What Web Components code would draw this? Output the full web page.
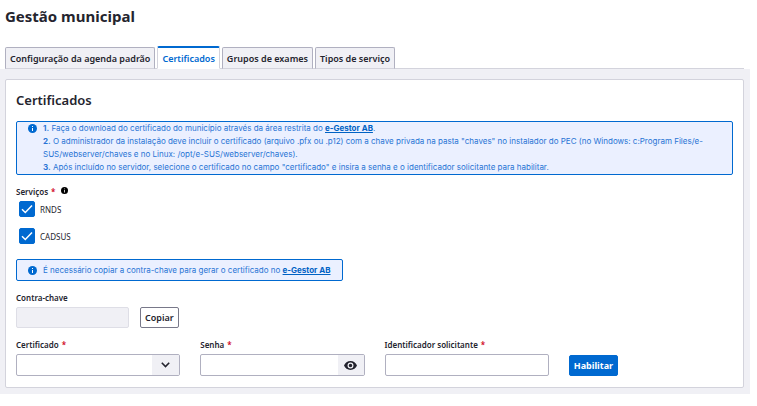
<!DOCTYPE html>
<html lang="pt-BR">
<head>
<meta charset="utf-8">
<title>Gestão municipal</title>
<style>
:root{--blue:#0069d0;--ink:#24242e;--grey:#f0f0f5;--line:#d3d3dc;--edge:#b0b0c0;--tint:#ebf0ff}
body{margin:0;padding-right:7px;background:#fff;color:var(--ink);font:8px/13px "Noto Sans","Open Sans",sans-serif}
</style>
</head>
<body>
<municipal-page></municipal-page>
<script>
const define=(name,html,setup)=>{
  const t=document.createElement('template');
  t.innerHTML='<style>*{box-sizing:border-box}button,input,select{font:inherit;color:inherit;margin:0}</style>'+html;
  customElements.define(name,class extends HTMLElement{
    constructor(){super();this.attachShadow({mode:'open'}).append(t.content.cloneNode(true));}
    connectedCallback(){if(setup)setup(this,this.shadowRoot);}
  });
};
const label=(el,root)=>{
  root.querySelector('.text').textContent=el.getAttribute('label');
  const star=root.querySelector('.star');
  if(star&&!el.hasAttribute('required'))star.remove();
};
const labelStyle='label{display:block;font-weight:600;line-height:13px;margin-bottom:3px}.star{color:#d0021b;margin-left:3px}';

define('info-icon',`<style>:host{display:inline-block;width:9px;height:9px}svg{display:block;width:100%;height:100%}</style>
<svg viewBox="0 0 18 18" aria-hidden="true"><circle cx="9" cy="9" r="9" fill="currentColor"/><path d="M8 4h2v2H8zM8 8h2v6H8z" fill="#fff"/></svg>`);

define('tab-item',`<style>:host{display:block}
button{display:block;height:22px;padding:0 4px;border:1px solid var(--edge);border-bottom-color:var(--line);border-radius:2px 2px 0 0;background:var(--grey);font-size:9px;font-weight:600;white-space:nowrap}
:host([active]) button{height:23px;border-color:var(--line);border-top:2px solid var(--blue);border-bottom-color:#fff;background:#fff;color:var(--blue)}
</style><button type="button" role="tab"><slot></slot></button>`,
(el,r)=>r.querySelector('button').setAttribute('aria-selected',el.hasAttribute('active')));

define('tab-bar',`<style>:host{display:flex;align-items:flex-end;gap:2px;margin:0 6px 0 5px;border-bottom:1px solid var(--line)}
::slotted(*){margin-bottom:-1px}</style><slot></slot>`,el=>el.setAttribute('role','tablist'));

define('info-alert',`<style>:host{display:flex;gap:6px;padding:0 11px;border:1px solid var(--blue);border-radius:2px;background:var(--tint);color:#2874d5;font-family:Inter,"Noto Sans",sans-serif}
:host([compact]){width:fit-content;padding:4px 11px 3px}
info-icon{flex:none;margin-top:2px;color:var(--blue)}</style><info-icon></info-icon><div><slot></slot></div>`);

define('text-link',`<style>a{color:#0062c4;font-weight:700;text-decoration:underline}</style><a href="#"><slot></slot></a>`);

define('check-field',`<style>:host{display:block;padding-left:3px}
label{display:flex;align-items:center;gap:5px;width:fit-content}
span.box{display:grid;width:16px;height:16px}
input,svg{grid-area:1/1;width:16px;height:16px}
input{appearance:none;border:1px solid var(--blue);border-radius:2px}
input:checked{background:var(--blue)}
svg{pointer-events:none;visibility:hidden}input:checked+svg{visibility:visible}</style>
<label><span class="box"><input type="checkbox" checked><svg viewBox="0 0 16 16" fill="none" stroke="#fff" stroke-width="1.500"><path d="M3 8.200 6.300 11.500 13 4.500"/></svg></span><span class="text"></span></label>`,label);

define('text-field',`<style>:host{display:block}${labelStyle}
input{display:block;width:100%;height:22px;padding:0 6px;border:1px solid var(--edge);border-radius:2px;background:#fff}
input:disabled{height:21px;background:var(--grey);border-color:#dedee6}</style>
<label for="f"><span class="text"></span><span class="star">*</span></label><input id="f" type="text">`,
(el,r)=>{label(el,r);r.querySelector('input').disabled=el.hasAttribute('disabled');});

define('select-field',`<style>:host{display:block}${labelStyle}
.wrap{display:grid;grid-template-columns:1fr 27px;height:22px;border:1px solid var(--edge);border-radius:2px;overflow:hidden}
.end{grid-area:1/2;display:grid;place-items:center;background:var(--grey);pointer-events:none}
select{grid-area:1/1/2/3;appearance:none;border:0;background:none;width:100%;padding:0 6px}
svg{width:9px;height:6px}</style>
<label for="f"><span class="text"></span><span class="star">*</span></label>
<div class="wrap"><span class="end"><svg viewBox="0 0 9 6" fill="none" stroke="#24242e" stroke-width="1.600"><path d="M.8.8 4.500 4.500 8.200.8"/></svg></span><select id="f"><option></option></select></div>`,label);

define('password-field',`<style>:host{display:block}${labelStyle}
.wrap{display:grid;grid-template-columns:1fr 26px;height:22px;border:1px solid var(--edge);border-radius:2px;overflow:hidden}
input{border:0;background:none;min-width:0;width:100%;padding:0 6px}
button{display:grid;place-items:center;border:0;padding:0;background:var(--grey)}
svg{width:13px;height:9px}</style>
<label for="f"><span class="text"></span><span class="star">*</span></label>
<div class="wrap"><input id="f" type="password"><button type="button" aria-label="Mostrar senha"><svg viewBox="0 0 22 15"><path fill="#24242e" fill-rule="evenodd" d="M11 0C6 0 1.700 3.100 0 7.500 1.700 11.900 6 15 11 15s9.300-3.100 11-7.500C20.300 3.100 16 0 11 0Zm0 12.500a5 5 0 1 1 0-10 5 5 0 0 1 0 10Zm0-2a3 3 0 1 0 0-6 3 3 0 0 0 0 6Z"/></svg></button></div>`,label);

define('action-button',`<style>:host{display:block}
button{display:block;height:21px;padding:0 4px;border:1px solid #787889;border-radius:2px;background:#fff;font-size:9px;font-weight:600}
:host([primary]) button{border-color:var(--blue);background:var(--blue);color:#fff;font-weight:700}</style><button type="button"><slot></slot></button>`);

define('content-card',`<style>:host{display:block;padding:10px 10px 11px;border:1px solid var(--line);border-radius:2px;background:#fff}
h2{margin:0 0 11px;font-size:13px;line-height:20px;font-weight:600}</style><h2><slot name="title"></slot></h2><slot></slot>`);

define('municipal-page',`<style>:host{display:block}
h1{margin:0;padding:5px 5px 19px;font-size:15px;line-height:22px;font-weight:700}
main{padding:10px 6px 6px 5px;background:var(--grey)}
fieldset{border:0;margin:10px 0 0;padding:0;display:grid;gap:11px}
legend{display:flex;align-items:center;gap:6px;margin:0 0 3px;padding:0;font-weight:600;line-height:13px}
legend info-icon{width:7px;height:7px;color:#000;margin-bottom:3px}
.star{color:#d0021b;margin-left:3px}
.notice{margin:15px 0 10px}
.key{display:flex;align-items:flex-end;gap:11px;margin-bottom:10px}
.key text-field{width:113px}
.fields{display:grid;grid-template-columns:repeat(4,1fr);gap:20px;align-items:end}
</style>
<h1>Gestão municipal</h1>
<tab-bar><tab-item>Configuração da agenda padrão</tab-item><tab-item active>Certificados</tab-item><tab-item>Grupos de exames</tab-item><tab-item>Tipos de serviço</tab-item></tab-bar>
<main><content-card><span slot="title">Certificados</span>
<info-alert><div><b>1.</b> Faça o download do certificado do município através da área restrita do <text-link>e-Gestor AB</text-link>.</div>
<div><b>2.</b> O administrador da instalação deve incluir o certificado (arquivo .pfx ou .p12) com a chave privada na pasta "chaves" no instalador do PEC (no Windows: c:Program Files/e-SUS/webserver/chaves e no Linux: /opt/e-SUS/webserver/chaves).</div>
<div><b>3.</b> Após incluído no servidor, selecione o certificado no campo "certificado" e insira a senha e o identificador solicitante para habilitar.</div></info-alert>
<fieldset><legend><span>Serviços<span class="star">*</span></span><info-icon></info-icon></legend>
<check-field label="RNDS"></check-field><check-field label="CADSUS"></check-field></fieldset>
<info-alert compact class="notice">É necessário copiar a contra-chave para gerar o certificado no <text-link>e-Gestor AB</text-link></info-alert>
<div class="key"><text-field label="Contra-chave" disabled></text-field><action-button>Copiar</action-button></div>
<div class="fields"><select-field label="Certificado" required></select-field><password-field label="Senha" required></password-field><text-field label="Identificador solicitante" required></text-field><action-button primary>Habilitar</action-button></div>
</content-card></main>`);
</script>
</body>
</html>
